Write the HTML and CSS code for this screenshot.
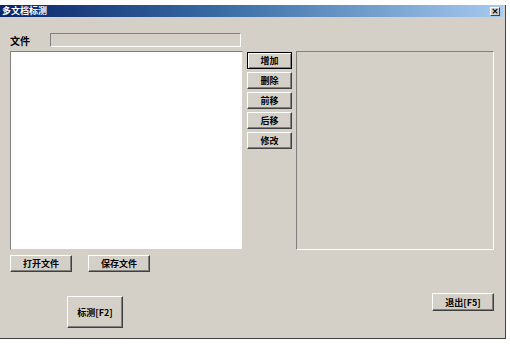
FILE: index.html
```html
<!DOCTYPE html>
<html lang="zh">

<head>
  <meta charset="UTF-8" />
  <title>多文档标测</title>
  <link rel="stylesheet" href="styles.css">
</head>

<body>
  <div class="window">
    <div class="title-bar">
      <span class="title">多文档标测</span>
      <span class="close-button">×</span>
    </div>

    <div class="main">
      <div class="file-row">
        <span class="file-label">文件</span>
        <div class="file-field"></div>
      </div>

      <div class="body-row">
        <div class="list-box"></div>

        <div class="side-buttons">
          <button class="win-button side-button default-button">增加</button>
          <button class="win-button side-button">删除</button>
          <button class="win-button side-button">前移</button>
          <button class="win-button side-button">后移</button>
          <button class="win-button side-button">修改</button>
        </div>

        <div class="preview-panel"></div>
      </div>

      <div class="file-buttons">
        <button class="win-button file-button">打开文件</button>
        <button class="win-button file-button">保存文件</button>
      </div>

      <div class="bottom-row">
        <button class="win-button measure-button">标测[F2]</button>
        <button class="win-button exit-button">退出[F5]</button>
      </div>
    </div>
  </div>
</body>

</html>
```

FILE: styles.css
```css
* {
  box-sizing: border-box;
}

body {
  margin: 0;
  background: #ffffff;
  font-family: "Noto Sans CJK SC", "DejaVu Sans", sans-serif;
}

.window {
  width: 506px;
  height: 334px;
  margin-top: 5px;
  background: #d4d0c8;
  border-right: 1px solid #404040;
  border-bottom: 1px solid #404040;
  display: flex;
  flex-direction: column;
}

.title-bar {
  height: 12px;
  margin: 0 2px 0 0;
  background: linear-gradient(90deg, #0a246a, #3a6ea5 45%, #a6caf0);
  display: flex;
  align-items: center;
  justify-content: space-between;
  padding: 0 3px 0 2px;
}

.title {
  color: #ffffff;
  font-size: 9px;
  font-weight: bold;
  line-height: 12px;
}

.close-button {
  width: 10px;
  height: 9px;
  background: #d4d0c8;
  border-top: 1px solid #ffffff;
  border-left: 1px solid #ffffff;
  border-right: 1px solid #404040;
  border-bottom: 1px solid #404040;
  font-size: 9px;
  line-height: 7px;
  text-align: center;
  font-weight: bold;
  color: #000;
  font-family: "DejaVu Sans", sans-serif;
}

.main {
  flex: 1;
  padding: 16px 10px 0 10px;
  display: flex;
  flex-direction: column;
}

.file-row {
  display: flex;
  align-items: center;
  height: 14px;
}

.file-label {
  width: 40px;
  font-size: 10px;
  font-weight: bold;
  color: #000;
}

.file-field {
  width: 191px;
  height: 14px;
  border-top: 1px solid #808080;
  border-left: 1px solid #808080;
  border-right: 1px solid #ffffff;
  border-bottom: 1px solid #ffffff;
}

.body-row {
  display: flex;
  gap: 4px;
  margin-top: 4px;
  height: 199px;
}

.list-box {
  width: 233px;
  background: #ffffff;
  border-top: 1px solid #808080;
  border-left: 1px solid #808080;
  border-right: 1px solid #d4d0c8;
  border-bottom: 1px solid #d4d0c8;
}

.side-buttons {
  width: 45px;
  display: flex;
  flex-direction: column;
  gap: 3px;
  padding-top: 1px;
}

.preview-panel {
  width: 198px;
  border-top: 1px solid #808080;
  border-left: 1px solid #808080;
  border-right: 1px solid #ffffff;
  border-bottom: 1px solid #ffffff;
}

.win-button {
  background: #d4d0c8;
  border-top: 1px solid #ffffff;
  border-left: 1px solid #ffffff;
  border-right: 1px solid #404040;
  border-bottom: 1px solid #404040;
  box-shadow: inset -1px -1px 0 #808080;
  font-family: "Noto Sans CJK SC", "DejaVu Sans", sans-serif;
  font-size: 9px;
  font-weight: bold;
  color: #000;
  padding: 0;
  line-height: 1;
}

.side-button {
  height: 17px;
}

.default-button {
  border: 1px solid #000;
  box-shadow: inset 1px 1px 0 #ffffff, inset -1px -1px 0 #808080;
}

.file-buttons {
  display: flex;
  gap: 16px;
  margin-top: 5px;
}

.file-button {
  width: 62px;
  height: 17px;
}

.bottom-row {
  display: flex;
  align-items: flex-start;
  padding-right: 1px;
}

.measure-button {
  width: 56px;
  height: 32px;
  margin: 24px 0 0 57px;
}

.exit-button {
  width: 62px;
  height: 18px;
  margin: 21px 0 0 auto;
}
```
